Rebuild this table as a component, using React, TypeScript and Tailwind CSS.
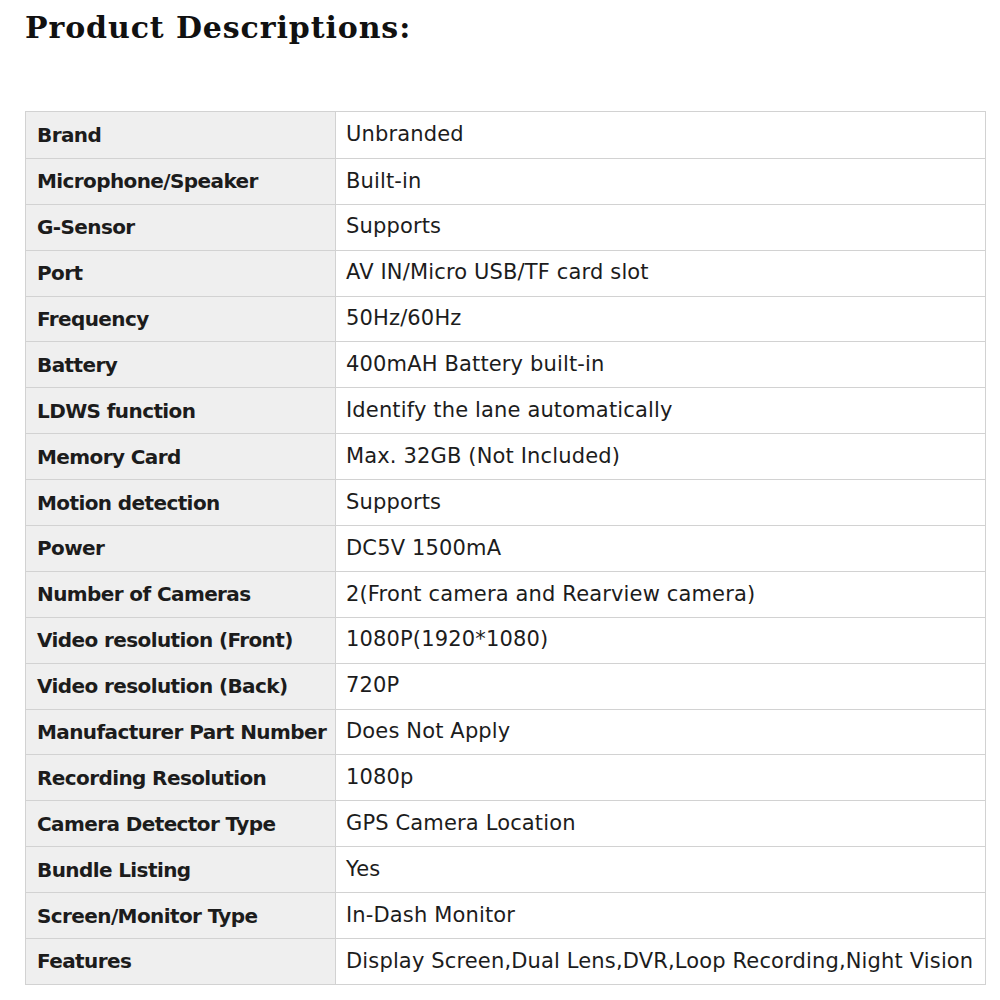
import React from "react";

const rows: [string, string][] = [
  ["Brand", "Unbranded"],
  ["Microphone/Speaker", "Built-in"],
  ["G-Sensor", "Supports"],
  ["Port", "AV IN/Micro USB/TF card slot"],
  ["Frequency", "50Hz/60Hz"],
  ["Battery", "400mAH Battery built-in"],
  ["LDWS function", "Identify the lane automatically"],
  ["Memory Card", "Max. 32GB (Not Included)"],
  ["Motion detection", "Supports"],
  ["Power", "DC5V 1500mA"],
  ["Number of Cameras", "2(Front camera and Rearview camera)"],
  ["Video resolution (Front)", "1080P(1920*1080)"],
  ["Video resolution (Back)", "720P"],
  ["Manufacturer Part Number", "Does Not Apply"],
  ["Recording Resolution", "1080p"],
  ["Camera Detector Type", "GPS Camera Location"],
  ["Bundle Listing", "Yes"],
  ["Screen/Monitor Type", "In-Dash Monitor"],
  ["Features", "Display Screen,Dual Lens,DVR,Loop Recording,Night Vision"],
];

export default function App() {
  return (
    <div className="w-[1000px] h-[1000px] bg-white overflow-hidden">
      <h1 className="pl-[25px] pt-[10px] text-[30px] leading-[36px] font-bold text-[#111] [font-family:'DejaVu_Serif',serif] tracking-[0.9px]">
        Product Descriptions:
      </h1>
      <div className="ml-[25px] mt-[65px] w-[961px] border border-[#d2d2d2] flex flex-col text-[#1c1c1c] [font-family:'DejaVu_Sans',sans-serif]">
        {rows.map(([k, v], i) => (
          <div
            key={k}
            className={`grid grid-cols-[310px_1fr] h-[45.9px] ${i > 0 ? "border-t border-[#d2d2d2]" : ""}`}
          >
            <div className="bg-[#efefef] border-r border-[#d2d2d2] flex items-center pl-[11px] text-[20px] font-bold tracking-[-0.6px]">
              {k}
            </div>
            <div className="flex items-center pl-[10px] text-[21px] tracking-[0.15px]">{v}</div>
          </div>
        ))}
      </div>
    </div>
  );
}
